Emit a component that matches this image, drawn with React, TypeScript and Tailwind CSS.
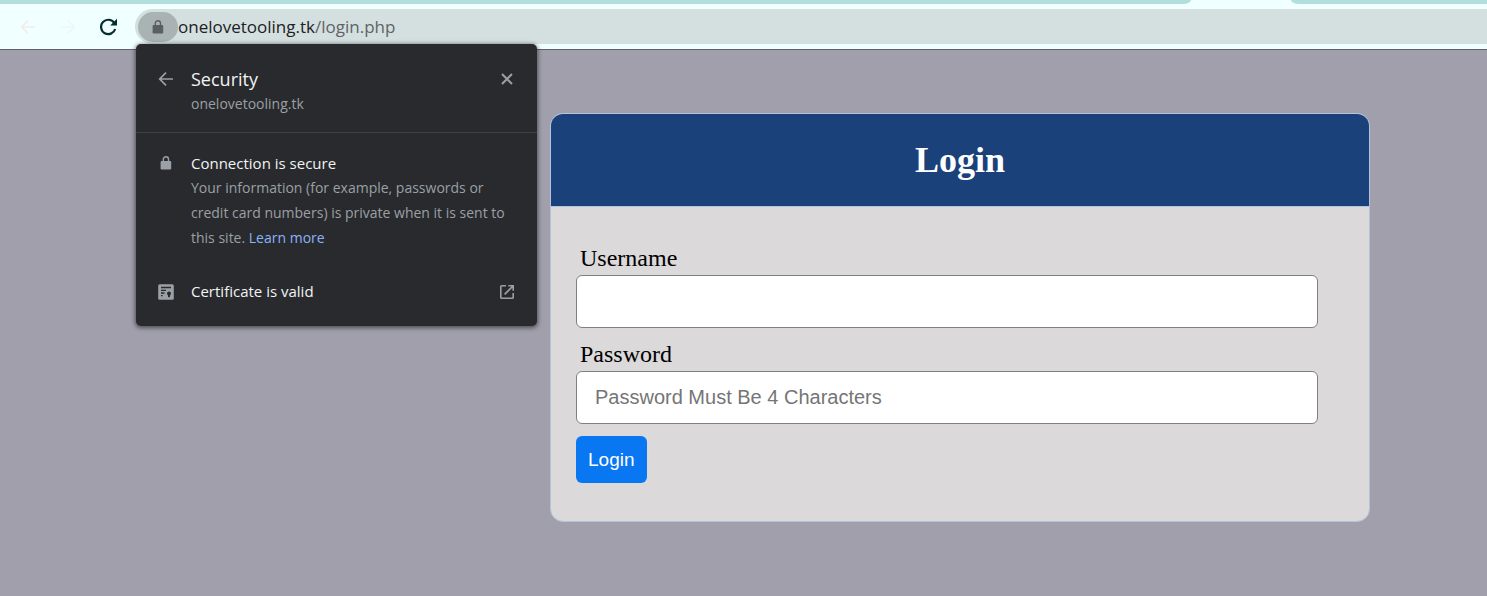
import React from "react";

type IconProps = { className?: string };

function ArrowIcon({ className }: IconProps) {
  return (
    <svg viewBox="0 0 16 16" fill="none" stroke="currentColor" strokeWidth="1.7" className={className} aria-hidden="true">
      <path d="M15 8H2.4M8 1.7 1.7 8 8 14.3" />
    </svg>
  );
}

function ReloadIcon({ className }: IconProps) {
  return (
    <svg viewBox="0 0 18 18" fill="none" className={className} aria-hidden="true">
      <path d="M15.2 4.8A7.2 7.2 0 1 0 16.2 11" stroke="currentColor" strokeWidth="2.2" />
      <path d="M18 .8V7.6H11.2z" fill="currentColor" />
    </svg>
  );
}

function LockIcon({ className }: IconProps) {
  return (
    <svg viewBox="0 0 12 14" fill="none" className={className} aria-hidden="true">
      <rect x=".6" y="5" width="10.6" height="8.6" rx="1" fill="currentColor" />
      <path d="M3.3 6V3.4a2.6 2.6 0 0 1 5.2 0V6" stroke="currentColor" strokeWidth="1.4" />
    </svg>
  );
}

function CloseIcon({ className }: IconProps) {
  return (
    <svg viewBox="0 0 12 12" fill="none" stroke="currentColor" strokeWidth="2" className={className} aria-hidden="true">
      <path d="m1 1 10 10M11 1 1 11" />
    </svg>
  );
}

function CertificateIcon({ className }: IconProps) {
  return (
    <svg viewBox="0 0 16 16" fill="none" className={className} aria-hidden="true">
      <rect x=".2" y=".2" width="15.6" height="15.6" rx="1.5" fill="currentColor" />
      <path d="M3 3.5h10M3 6.3h5M3 9h3.5M3 11.6h1.6" stroke="#292a2d" strokeWidth="1.3" />
      <circle cx="11" cy="9.6" r="2" fill="#292a2d" />
      <path d="M10 10.5h2v3l-1-.8-1 .8z" fill="#292a2d" />
    </svg>
  );
}

function ExternalIcon({ className }: IconProps) {
  return (
    <svg viewBox="0 0 14 14" fill="none" stroke="currentColor" strokeWidth="1.6" className={className} aria-hidden="true">
      <path d="M6 .8H1.6a.8.8 0 0 0-.8.8v10.8c0 .5.3.8.8.8h10.8c.5 0 .8-.3.8-.8V8M8.3 .8h4.9v4.9M13 1 4.6 9.4" />
    </svg>
  );
}

function SecurityPopup() {
  return (
    <section
      aria-label="Security"
      className="absolute left-[136px] top-11 w-[401px] rounded-[5px] bg-[#292a2d] pb-[22px] text-[#9aa0a6] shadow-[0_1px_4px_1px_rgba(0,0,0,0.5)]"
    >
      <header className="flex items-start border-b border-[#3f4144] pb-4 pl-[22px] pr-6 pt-[22px]">
        <button type="button" aria-label="Back" className="mt-[5px] flex w-[33px]">
          <ArrowIcon className="size-4" />
        </button>
        <div className="flex-1">
          <h2 className="text-[18px] leading-[26px] text-[#f1f3f4]">Security</h2>
          <p className="text-[14px] leading-6">onelovetooling.tk</p>
        </div>
        <button type="button" aria-label="Close" className="mt-[7px]">
          <CloseIcon className="size-3" />
        </button>
      </header>

      <div className="flex items-start pl-[22px] pr-6 pt-[18px]">
        <div className="w-[33px] pl-[2px] pt-[5px]">
          <LockIcon className="h-[14px] w-3" />
        </div>
        <div className="flex-1">
          <h3 className="text-[15px] leading-6 text-[#f1f3f4]">Connection is secure</h3>
          <p className="text-[14px] leading-[25px]">
            Your information (for example, passwords or credit card numbers) is private when it is sent to this site.{" "}
            <a href="#learn-more" className="text-[#8ab4f8]">Learn more</a>
          </p>
        </div>
      </div>

      <button type="button" className="mt-[29px] flex w-full items-center pl-[22px] pr-[23px] text-left">
        <span className="w-[33px]">
          <CertificateIcon className="size-4" />
        </span>
        <span className="flex-1 text-[15px] leading-[25px] text-[#f1f3f4]">Certificate is valid</span>
        <ExternalIcon className="size-[14px]" />
      </button>
    </section>
  );
}

function BrowserBar() {
  return (
    <div className="border-b border-[#5f6368] bg-[#f0ffff]">
      <div className="flex h-1 gap-[100px]">
        <div className="w-[80.1%] rounded-br-[8px_4px] bg-[#b2dfdb]" />
        <div className="flex-1 rounded-bl-[8px_4px] bg-[#b2dfdb]" />
      </div>
      <div className="flex items-center pb-[5px] pt-[5px]">
        <div className="flex w-[135px] items-center pl-5">
          <button type="button" aria-label="Back" className="w-10 text-[#f6ebeb]">
            <ArrowIcon className="size-4" />
          </button>
          <button type="button" aria-label="Forward" className="w-[39px] text-[#edf7f7]">
            <ArrowIcon className="size-4 rotate-180" />
          </button>
          <button type="button" aria-label="Reload" className="text-[#042f2e]">
            <ReloadIcon className="size-[18px]" />
          </button>
        </div>
        <div className="flex h-[35px] flex-1 items-center rounded-l-full bg-[#d4e0e0] pl-[3px]">
          <button
            type="button"
            aria-label="View site information"
            className="flex h-[30px] w-10 items-center justify-center rounded-full bg-[#a9b3b3] text-[#5a6062]"
          >
            <LockIcon className="h-[14px] w-3" />
          </button>
          <p className="text-[17px] leading-6 text-[#5f6368]">
            <span className="text-[#202124]">onelovetooling.tk</span>/login.php
          </p>
        </div>
      </div>
    </div>
  );
}

const inputClass =
  "h-[53px] w-full rounded-md border border-[#808080] bg-white px-[18px] font-['Liberation_Sans',Arial,sans-serif] text-[20px] text-black placeholder:text-[#757575] placeholder:opacity-100";

function LoginCard() {
  return (
    <main className="pb-[75px] pl-[550px] pr-[117px] pt-[63px] font-['Liberation_Serif','Times_New_Roman',serif]">
      <div className="overflow-hidden rounded-[13px] border border-[#b0c4de] bg-[#dbd9da]">
        <h1 className="border-b border-[#b0c4de] bg-[#1b417a] pb-[25px] pt-[26px] text-center text-[36px] font-bold leading-[41px] text-white">
          Login
        </h1>
        <form className="pb-[38px] pl-[25px] pr-[51px] pt-[37px]" onSubmit={(e) => e.preventDefault()}>
          <div className="mb-3">
            <label htmlFor="username" className="mb-[3px] block pl-1 text-[24px] leading-7">Username</label>
            <input id="username" type="text" className={inputClass} />
          </div>
          <div className="mb-3">
            <label htmlFor="password" className="mb-[3px] block pl-1 text-[24px] leading-7">Password</label>
            <input id="password" type="password" placeholder="Password Must Be 4 Characters" className={inputClass} />
          </div>
          <button
            type="submit"
            className="rounded-md bg-[#0a77f2] px-3 py-3 font-['Liberation_Sans',Arial,sans-serif] text-[19px] leading-[23px] text-white"
          >
            Login
          </button>
        </form>
      </div>
    </main>
  );
}

export default function App() {
  return (
    <div className="relative min-h-screen bg-[#a09fab] font-['Open_Sans','Segoe_UI',sans-serif]">
      <BrowserBar />
      <LoginCard />
      <SecurityPopup />
    </div>
  );
}
